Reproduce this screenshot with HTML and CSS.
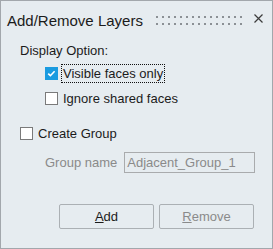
FILE: index.html
```html
<!DOCTYPE html>
<html lang="en">
<head>
  <meta charset="UTF-8">
  <title>Add/Remove Layers</title>
  <link rel="stylesheet" href="styles.css">
</head>
<body>
  <div class="dialog">
    <div class="titlebar">
      <span class="title">Add/Remove Layers</span>
      <svg class="grip" width="86" height="9" viewBox="0 0 86 9">
        <g fill="#8b9095" id="dots"></g>
      </svg>
      <svg class="close" width="9" height="9" viewBox="0 0 9 9">
        <path d="M0.5 0.5 L8.5 8.5 M8.5 0.5 L0.5 8.5" stroke="#3c3c3c" stroke-width="1.2" fill="none"/>
      </svg>
    </div>

    <div class="content">
      <div class="heading">Display Option:</div>
      <div class="options">
        <div class="row">
          <span class="box checked">
            <svg width="11" height="11" viewBox="0 0 11 11"><path d="M2.2 5.6 L4.4 7.7 L8.6 3.3" stroke="#fff" stroke-width="1.6" fill="none"/></svg>
          </span>
          <span class="label focus">Visible faces only</span>
        </div>
        <div class="row">
          <span class="box"></span>
          <span class="label">Ignore shared faces</span>
        </div>
      </div>

      <div class="row create">
        <span class="box"></span>
        <span class="label">Create Group</span>
      </div>

      <div class="group">
        <span class="group-label">Group name</span>
        <div class="field">Adjacent_Group_1</div>
      </div>
    </div>

    <div class="actions">
      <button class="btn"><u>A</u>dd</button>
      <button class="btn disabled"><u>R</u>emove</button>
    </div>
  </div>
  <script>
    const dots = document.getElementById('dots');
    for (let i = 0; i < 15; i++) {
      for (const y of [0, 7]) {
        const r = document.createElementNS('http://www.w3.org/2000/svg', 'rect');
        r.setAttribute('x', i * 6);
        r.setAttribute('y', y);
        r.setAttribute('width', 2);
        r.setAttribute('height', 2);
        dots.appendChild(r);
      }
    }
  </script>
</body>
</html>
```

FILE: styles.css
```css
body {
    margin: 0;
    padding: 0;
    font-family: 'Liberation Sans', Arial, sans-serif;
    color: #1b1b1b;
}
.dialog {
    box-sizing: border-box;
    width: 273px;
    height: 249px;
    border: 1px solid #a2a7ac;
    background: #e6ecf0;
}
.titlebar {
    display: flex;
    align-items: center;
    height: 18px;
    padding: 10px 9px 0 6px;
}
.title {
    flex: 1;
    font-size: 15px;
    line-height: 17px;
    white-space: nowrap;
}
.grip {
    display: block;
}
.close {
    display: block;
    margin-left: 12px;
    margin-bottom: 3px;
}
.content {
    padding: 14px 18px 0 19px;
    font-size: 13px;
}
.heading {
    line-height: 15px;
}
.options {
    display: flex;
    flex-direction: column;
    gap: 6px;
    margin-top: 6px;
    padding-left: 25px;
}
.row {
    display: flex;
    align-items: center;
    gap: 3px;
    height: 19px;
}
.create {
    margin-top: 16px;
}
.box {
    box-sizing: border-box;
    display: flex;
    align-items: center;
    justify-content: center;
    flex: none;
    width: 13px;
    height: 13px;
    border: 1px solid #7a7a7a;
    background: #fff;
}
.box.checked {
    border-color: #1a9be0;
    background: #1a9be0;
}
.label {
    padding: 0 1px;
    line-height: 17px;
    border: 1px solid transparent;
    white-space: nowrap;
}
.label.focus {
    border: 1px dotted #111;
}
.group {
    display: flex;
    align-items: center;
    gap: 7px;
    margin-top: 9px;
    padding-left: 25px;
}
.group-label {
    flex: none;
    white-space: nowrap;
    color: #8a8a8a;
}
.field {
    box-sizing: border-box;
    flex: none;
    width: 131px;
    height: 21px;
    padding-left: 2px;
    line-height: 19px;
    border: 1px solid #a9abad;
    color: #8a8a8a;
    white-space: nowrap;
}
.actions {
    display: flex;
    justify-content: flex-end;
    gap: 5px;
    margin-top: 31px;
    padding-right: 18px;
}
.btn {
    box-sizing: border-box;
    width: 95px;
    height: 25px;
    padding: 0;
    border: 1px solid #abb0b4;
    border-radius: 2px;
    background: #e6ecf0;
    font-family: 'Liberation Sans', Arial, sans-serif;
    font-size: 13px;
    color: #1b1b1b;
}
.btn.disabled {
    color: #8a8a8a;
}
```
